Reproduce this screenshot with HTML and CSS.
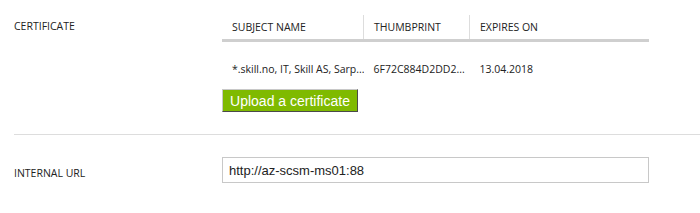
FILE: index.html
```html
<!DOCTYPE html>
<html lang="en">
<head>
    <meta charset="UTF-8">
    <title>Certificate settings</title>
    <link rel="stylesheet" href="styles.css">
</head>
<body>
<div class="settings">
    <!-- Certificate -->
    <div class="field cert-field">
        <div class="field-label cert-label">CERTIFICATE</div>
        <div class="field-body">
            <table class="cert-table">
                <thead>
                    <tr>
                        <th class="col-subject">SUBJECT NAME</th>
                        <th class="col-thumb">THUMBPRINT</th>
                        <th class="col-expires">EXPIRES ON</th>
                    </tr>
                </thead>
                <tbody>
                    <tr>
                        <td>*.skill.no, IT, Skill AS, Sarp...</td>
                        <td>6F72C884D2DD2...</td>
                        <td>13.04.2018</td>
                    </tr>
                </tbody>
            </table>
            <button class="upload-btn">Upload a certificate</button>
        </div>
    </div>

    <div class="divider"></div>

    <!-- Internal URL -->
    <div class="field url-field">
        <div class="field-label url-label">INTERNAL URL</div>
        <div class="field-body">
            <input type="text" class="url-input" value="http://az-scsm-ms01:88">
        </div>
    </div>
</div>
</body>
</html>
```

FILE: styles.css
```css
body {
    margin: 0;
    background-color: #fff;
    font-family: 'Open Sans', sans-serif;
    font-size: 10.5px;
    color: #222;
}
.settings {
    width: 700px;
}
.field {
    display: flex;
    padding-left: 14px;
}
.field-label {
    width: 208px;
    flex-shrink: 0;
    color: #222;
}
.cert-field {
    padding-top: 15px;
    height: 119px;
}
.cert-label {
    padding-top: 4px;
}
.cert-table {
    width: 427px;
    border-collapse: collapse;
    table-layout: fixed;
}
.cert-table th {
    height: 24px;
    padding: 0 10px;
    text-align: left;
    font-weight: normal;
    color: #222;
    border-bottom: 3px solid #cfcfcf;
}
.cert-table th + th {
    border-left: 1px solid #ddd;
}
.col-subject {
    width: 121px;
}
.col-thumb {
    width: 85px;
}
.cert-table td {
    padding: 20px 10px 12px;
    line-height: 15px;
    white-space: nowrap;
    overflow: hidden;
}
.upload-btn {
    display: block;
    height: 23px;
    width: 136px;
    padding: 0;
    background-color: #7fba00;
    color: #fff;
    font-family: 'Liberation Sans', Arial, sans-serif;
    font-size: 14px;
    border: 1px solid;
    border-color: #c8c8c8 #4a4a4a #4a4a4a #c8c8c8;
    cursor: pointer;
}
.divider {
    margin-left: 14px;
    border-top: 1px solid #ddd;
}
.url-field {
    padding-top: 22px;
    align-items: center;
}
.url-label {
    padding-top: 6px;
}
.url-input {
    box-sizing: border-box;
    width: 427px;
    height: 26px;
    padding: 0 6px;
    border: 1px solid #c8c8c8;
    font-family: 'Liberation Sans', Arial, sans-serif;
    font-size: 13px;
    color: #222;
    outline: none;
}
```
